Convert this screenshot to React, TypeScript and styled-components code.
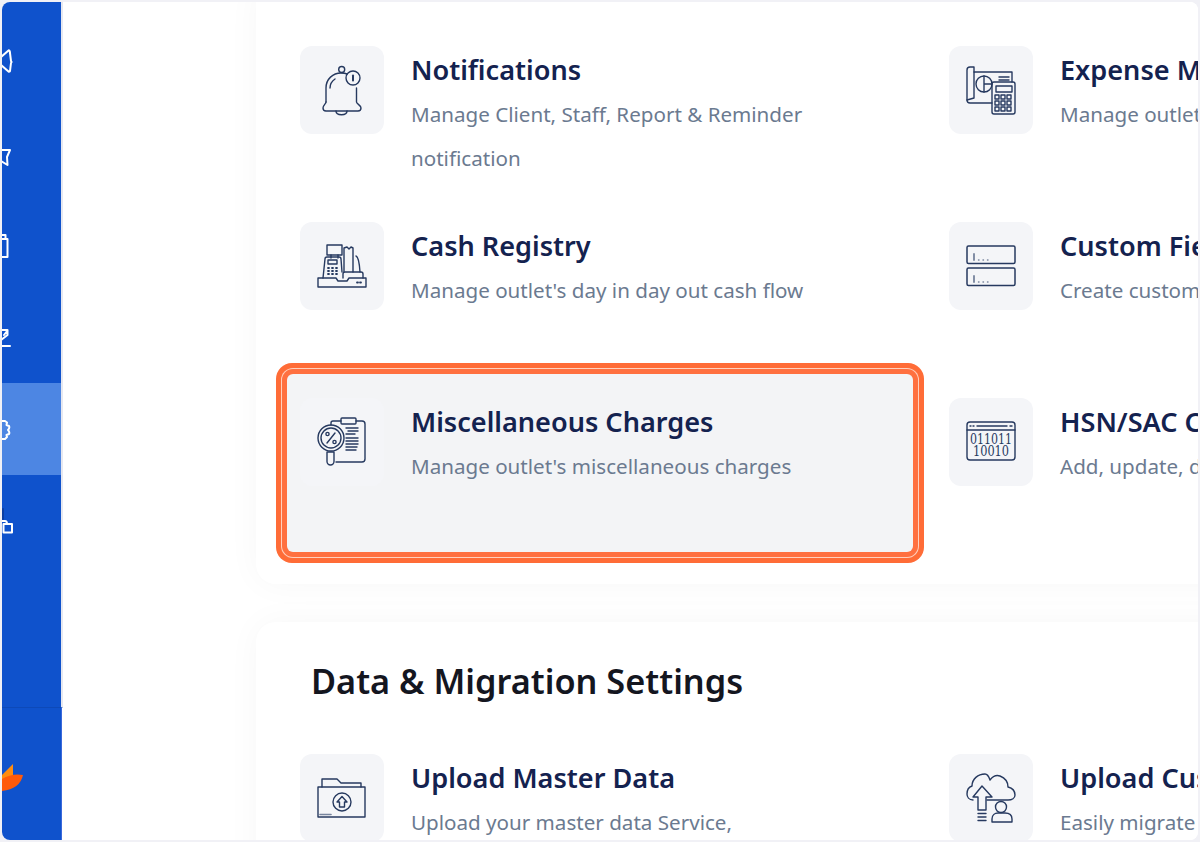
import React from 'react';
import styled, { createGlobalStyle } from 'styled-components';

const GlobalStyle = createGlobalStyle`
  html, body {
    margin: 0;
    height: 100%;
    overflow: hidden;
    background: #f1f1f6;
    font-family: "Noto Sans", "Open Sans", sans-serif;
  }
`;

const Frame = styled.div`
  box-sizing: border-box;
  width: 1200px;
  height: 842px;
  padding: 2px;
`;

const Window = styled.div`
  display: flex;
  height: 838px;
  background: #fff;
  border-radius: 8px;
  overflow: hidden;
`;

const Sidebar = styled.aside`
  flex: 0 0 61px;
  display: flex;
  flex-direction: column;
`;

const Nav = styled.nav`
  box-sizing: border-box;
  height: 706px;
  padding-top: 13px;
  background: #0f52cc;
  border-right: 2px solid #e6e8f0;
  border-bottom: 1px solid #0d49b8;
`;

const NavItem = styled.div<{ $active?: boolean }>`
  height: 92px;
  display: flex;
  align-items: center;
  background: ${(p) => (p.$active ? '#4d86e3' : 'transparent')};
`;

const NavGlyph = styled.svg`
  width: 14px;
  height: 28px;
  fill: none;
  stroke: #fff;
  stroke-width: 2;
  stroke-linejoin: round;
  stroke-linecap: round;
`;

const SideFoot = styled.div`
  flex: 1;
  width: 59px;
  padding-top: 55px;
  background: #0f52cc;
  border-right: 1px solid #3a68dc;
`;

const Main = styled.main`
  flex: 1;
  min-width: 0;
  padding-left: 193px;
  overflow: hidden;
`;

const Card = styled.section<{ $first?: boolean }>`
  box-sizing: border-box;
  width: 1100px;
  margin-top: ${(p) => (p.$first ? '-20px' : '38px')};
  padding: ${(p) => (p.$first ? '40px 0 34px 31px' : '35px 0 34px 31px')};
  background: #fff;
  border-radius: 20px;
  box-shadow: 0 0 34px rgba(0, 0, 0, 0.035);
`;

const Heading = styled.h2`
  margin: 0 0 25px 24px;
  font-size: 34.3px;
  line-height: 48px;
  font-weight: 600;
  color: #14161f;
`;

const Grid = styled.div`
  display: grid;
  grid-template-columns: 626px 626px;
  grid-auto-rows: 176px;
  column-gap: 23px;
  align-items: start;
`;

const Item = styled.div<{ $active?: boolean }>`
  box-sizing: border-box;
  display: flex;
  gap: 27px;
  height: ${(p) => (p.$active ? '178px' : '176px')};
  padding: 24px 0 0 13px;
  border-radius: 6px;
  background: ${(p) => (p.$active ? '#f3f4f6' : 'transparent')};
  box-shadow: ${(p) =>
    p.$active
      ? '0 0 0 5px #ff7040, 0 0 0 6px #ffd0bd, 0 0 0 11px #ff6c37'
      : 'none'};
`;

const IconBox = styled.div`
  flex: 0 0 84px;
  height: 88px;
  border-radius: 12px;
  background: #f4f5f8;
`;

const Art = styled.svg`
  display: block;
  width: 84px;
  height: 88px;
  fill: none;
  stroke: #26395f;
  stroke-width: 1.4;
  stroke-linejoin: round;
  stroke-linecap: round;
`;

const Copy = styled.div`
  width: 400px;
  padding-top: 2px;
`;

const Title = styled.div`
  font-size: 27.1px;
  line-height: 43.5px;
  font-weight: 600;
  color: #14224f;
  white-space: nowrap;
`;

const Desc = styled.div`
  font-size: 20.6px;
  line-height: 44px;
  color: #6b7a90;
`;

const BellIcon = () => (
  <Art viewBox="0 0 84 88">
    <circle cx="41.7" cy="23.5" r="3" />
    <path d="M26 56V42C26 33 33 27 41 27C43 27 45 27 47 28" />
    <path d="M56.5 42V56C56.5 58 61 59 61 62C61 64 60 65 58 65H26C24 65 23 64 23 62C23 59 26 58 26 56" />
    <path d="M36 65C36 70 47 70 47 65" />
    <path d="M30 42C30 38 32 35 35 33" />
    <circle cx="53" cy="32" r="7" />
    <path d="M53 29.5V34.5" strokeWidth="2" />
  </Art>
);

const RegisterIcon = () => (
  <Art viewBox="0 0 84 88">
    <path d="M18 56H36L38 59H47L49 56H66V65H18Z" />
    <rect x="27" y="23" width="15" height="10" />
    <path d="M31 33V36M38 33V36" />
    <path d="M23 56L25 37Q25 35 27 35H39Q41 35 41 37L42 50" />
    <rect x="28" y="38" width="9" height="4" />
    <path d="M28 46H29M32 46H33M36 46H37M28 49H29M32 49H33M36 49H37M28 52H29M32 52H33M36 52H37" strokeWidth="1.8" />
    <path d="M44 50V26L47 25L49 27L51 25L53 26V50" />
    <path d="M56 34Q59 35 60 50" />
    <path d="M43 56V52Q43 50 45 50H61Q63 50 63 52V56" />
    <path d="M57 60.500H58M60 60.500H61" strokeWidth="1.8" />
  </Art>
);

const ChargesIcon = () => (
  <Art viewBox="0 0 84 88">
    <path d="M41 23H33Q31 23 31 25V27M36 64H62Q65 64 65 61V26Q65 23 62 23H56" />
    <rect x="41" y="20" width="15" height="6" rx="1" />
    <path d="M46 30H58M48 33H58M46 36H55M46 40H58M46 43H58M46 46H58M46 49H57M46 52H56" />
    <circle cx="31" cy="40" r="13" />
    <circle cx="31" cy="40" r="10" />
    <path d="M27 54H34V63.500A3.500 3.500 0 0 1 27 63.500Z" />
    <path d="M35 35L27 45" />
    <circle cx="27.500" cy="36" r="1.600" />
    <circle cx="34.500" cy="44" r="1.600" />
  </Art>
);

const ExpenseIcon = () => (
  <Art viewBox="0 0 84 88">
    <path d="M25 26V21H21Q18 21 18 24V54Q18 57 21 57H43" />
    <path d="M25 26H63V36M25 26V52L18 54" />
    <circle cx="35" cy="38" r="8" />
    <path d="M35 30V46M35 38H43" />
    <path d="M50 31H60M50 34H60" />
    <rect x="43" y="36" width="23" height="32" rx="2" />
    <rect x="47" y="40" width="16" height="6" />
    <path d="M46 49h4v4h-4zM52 49h4v4h-4zM58 49h4v4h-4zM46 55h4v4h-4zM52 55h4v4h-4zM58 55h4v4h-4zM46 61h4v4h-4zM52 61h4v4h-4zM58 61h4v4h-4z" />
  </Art>
);

const FieldsIcon = () => (
  <Art viewBox="0 0 84 88">
    <rect x="18" y="24" width="48" height="17.500" rx="1.500" strokeWidth="1.500" />
    <rect x="18" y="46" width="48" height="17.500" rx="1.500" strokeWidth="1.500" />
    <path d="M25 32V38M25 54V60" strokeWidth="1.800" stroke="#77849d" />
    <path d="M29.500 38H30M34 38H34.500M38.500 38H39M29.500 60H30M34 60H34.500M38.500 60H39" stroke="#77849d" />
  </Art>
);

const CodeIcon = () => (
  <Art viewBox="0 0 84 88">
    <rect x="18" y="24" width="48" height="38" rx="3" />
    <path d="M18 32H66M21 28H22M24 28H25M28 28H58M61 28H63" />
    <text x="21" y="45.500" fontFamily="'DejaVu Serif', serif" fontSize="14" textLength="42" lengthAdjust="spacingAndGlyphs" fill="#26395f" stroke="none">011011</text>
    <text x="24" y="57.500" fontFamily="'DejaVu Serif', serif" fontSize="14" textLength="36" lengthAdjust="spacingAndGlyphs" fill="#26395f" stroke="none">10010</text>
  </Art>
);

const FolderIcon = () => (
  <Art viewBox="0 0 84 88">
    <path d="M22 33V25H37L41 29H61V33" />
    <path d="M18 33H65V63H18Z" />
    <circle cx="42" cy="48" r="9" />
    <path d="M42 42.500L47 48H44.500V53H39.500V48H37Z" />
    <path d="M20 60.500H31" strokeWidth="1.600" stroke="#77849d" />
  </Art>
);

const CloudUserIcon = () => (
  <Art viewBox="0 0 84 88">
    <path d="M24 46C20 46 18 43 18 40C18 36 20 33 23 32C23 25 29 20 36 20C38 20 40 23 41 26C44 22 48 21 51 22C56 24 59 28 59 33C63 34 66 37 66 41C66 44 63 46 59 46H38" />
    <path d="M33 32L43 43H37V56H29V43H24Z" />
    <path d="M29 59.500H37M29 63H37M29 66.500H37" />
    <circle cx="52" cy="53" r="5.500" />
    <path d="M43 68V65C43 61 46 59 49 59H56C60 59 63 61 63 65V68Z" />
  </Art>
);

const items = [
  { icon: <BellIcon />, title: 'Notifications', desc: 'Manage Client, Staff, Report & Reminder notification' },
  { icon: <ExpenseIcon />, title: 'Expense Management', desc: "Manage outlet's expenses and categories" },
  { icon: <RegisterIcon />, title: 'Cash Registry', desc: "Manage outlet's day in day out cash flow" },
  { icon: <FieldsIcon />, title: 'Custom Fields', desc: 'Create custom fields for your outlet' },
  { icon: <ChargesIcon />, title: 'Miscellaneous Charges', desc: "Manage outlet's miscellaneous charges", active: true },
  { icon: <CodeIcon />, title: 'HSN/SAC Codes', desc: 'Add, update, delete HSN/SAC codes' },
];

const migration = [
  { icon: <FolderIcon />, title: 'Upload Master Data', desc: 'Upload your master data Service, Product, Staff' },
  { icon: <CloudUserIcon />, title: 'Upload Customer Data', desc: 'Easily migrate your customer data' },
];

export default function App() {
  return (
    <Frame>
      <GlobalStyle />
      <Window>
        <Sidebar>
          <Nav>
            <NavItem>
              <NavGlyph viewBox="0 0 14 28">
                <path d="M-1 10L6.500 3.500Q7.500 3 7.800 4.500L9 14L9.600 15L9 16L8 24Q7.500 25 6.500 24.500L-1 18" />
              </NavGlyph>
            </NavItem>
            <NavItem>
              <NavGlyph viewBox="0 0 14 28">
                <path d="M-1 11H8L5 18L5.500 26L-1 22" />
              </NavGlyph>
            </NavItem>
            <NavItem>
              <NavGlyph viewBox="0 0 14 28">
                <path d="M-1 4H3.500V8M-1 8H5.500V26H-1" />
              </NavGlyph>
            </NavItem>
            <NavItem>
              <NavGlyph viewBox="0 0 14 28">
                <path d="M0 7H5.500V12L-1 17M2 12L5.500 7.500" />
                <path d="M-1 23H8" />
              </NavGlyph>
            </NavItem>
            <NavItem $active>
              <NavGlyph viewBox="0 0 14 28">
                <path d="M-1 6H3L5 7.500L4.500 10L7 11C8 13 6 15 6 15C6 15 8 17 7 19L4.500 20L5 22L3 24H-1" />
              </NavGlyph>
            </NavItem>
            <NavItem>
              <NavGlyph viewBox="0 0 14 28">
                <path d="M1 2V12" stroke="#0a3ea3" />
                <path d="M-1 14H3Q5 14 5 17" />
                <rect x="1.500" y="17" width="8.500" height="8.500" />
              </NavGlyph>
            </NavItem>
          </Nav>
          <SideFoot>
            <svg width="22" height="32" viewBox="0 0 22 32">
              <path d="M0 12L11 1V14L0 22Z" fill="#ff8c10" />
              <path d="M0 16Q10 10 21 12Q18 26 0 28Z" fill="#ff5a0a" />
            </svg>
          </SideFoot>
        </Sidebar>
        <Main>
          <Card $first>
            <Grid>
              {items.map((it) => (
                <Item key={it.title} $active={it.active}>
                  <IconBox>{it.icon}</IconBox>
                  <Copy>
                    <Title>{it.title}</Title>
                    <Desc>{it.desc}</Desc>
                  </Copy>
                </Item>
              ))}
            </Grid>
          </Card>
          <Card>
            <Heading>Data &amp; Migration Settings</Heading>
            <Grid>
              {migration.map((it) => (
                <Item key={it.title}>
                  <IconBox>{it.icon}</IconBox>
                  <Copy>
                    <Title>{it.title}</Title>
                    <Desc>{it.desc}</Desc>
                  </Copy>
                </Item>
              ))}
            </Grid>
          </Card>
        </Main>
      </Window>
    </Frame>
  );
}
